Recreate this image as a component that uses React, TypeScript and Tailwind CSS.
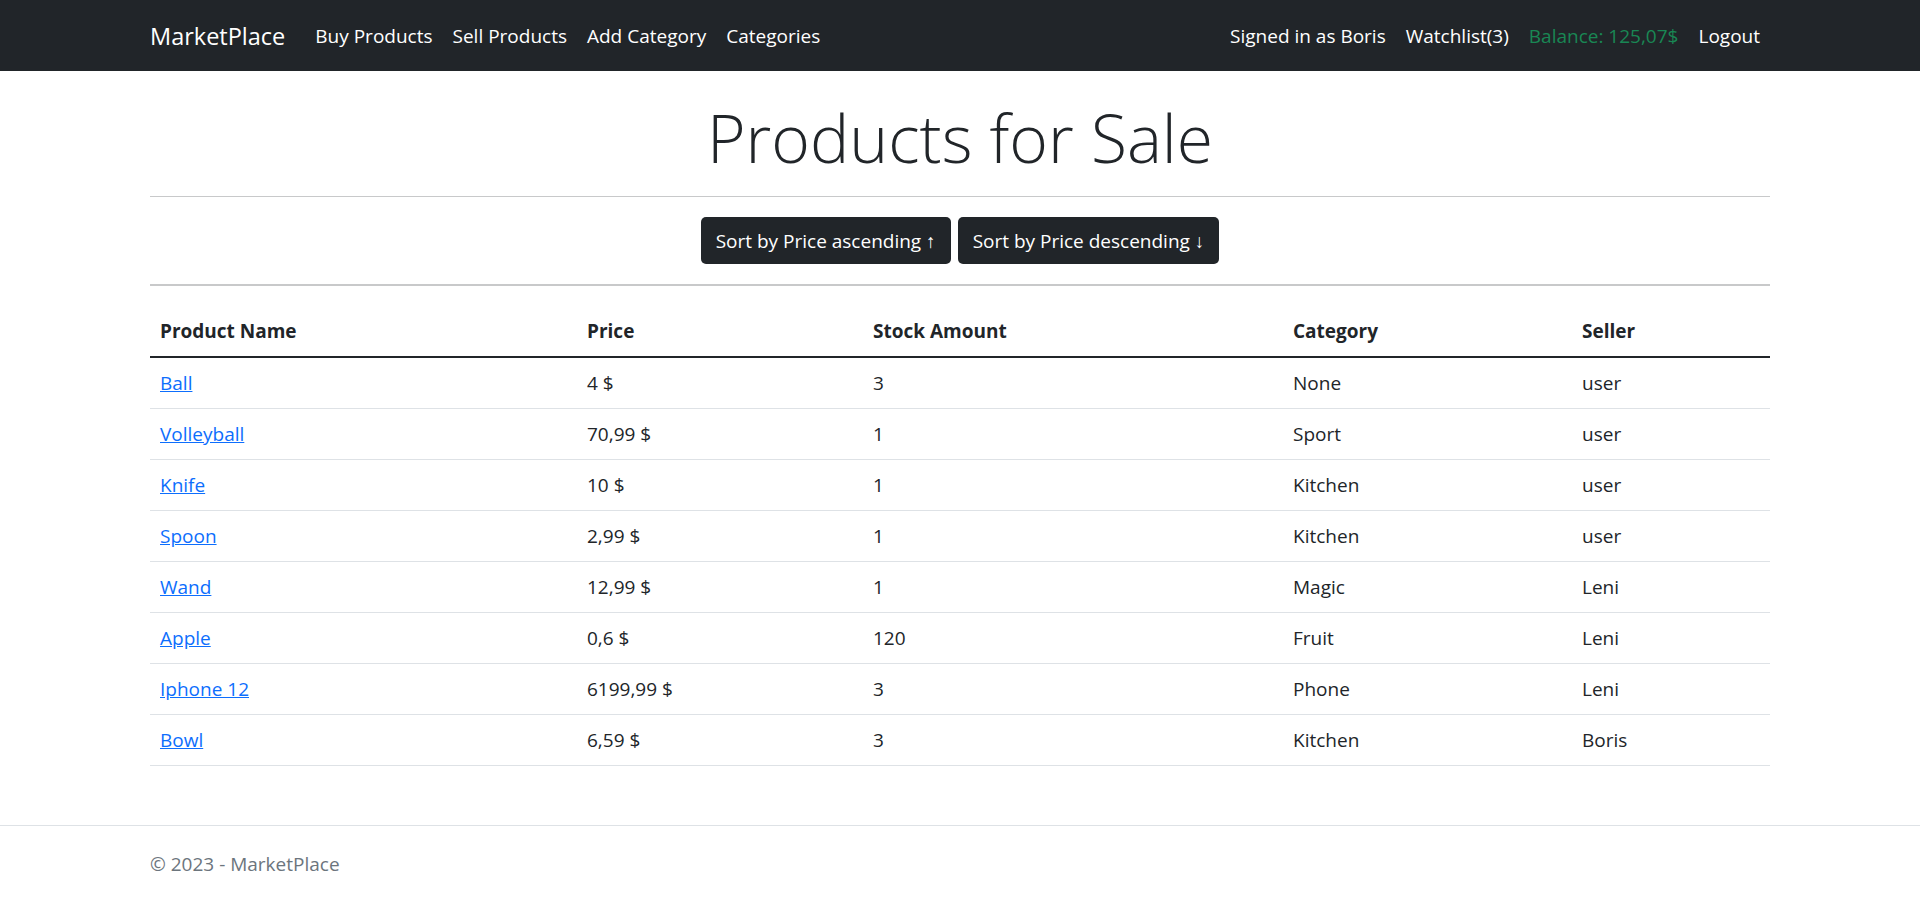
import React from 'react'

interface Product {
  name: string
  price: string
  stock: number
  category: string
  seller: string
}

const products: Product[] = [
  { name: 'Ball', price: '4 $', stock: 3, category: 'None', seller: 'user' },
  { name: 'Volleyball', price: '70,99 $', stock: 1, category: 'Sport', seller: 'user' },
  { name: 'Knife', price: '10 $', stock: 1, category: 'Kitchen', seller: 'user' },
  { name: 'Spoon', price: '2,99 $', stock: 1, category: 'Kitchen', seller: 'user' },
  { name: 'Wand', price: '12,99 $', stock: 1, category: 'Magic', seller: 'Leni' },
  { name: 'Apple', price: '0,6 $', stock: 120, category: 'Fruit', seller: 'Leni' },
  { name: 'Iphone 12', price: '6199,99 $', stock: 3, category: 'Phone', seller: 'Leni' },
  { name: 'Bowl', price: '6,59 $', stock: 3, category: 'Kitchen', seller: 'Boris' },
]

const font = { fontFamily: "'Segoe UI', 'Open Sans', 'Noto Sans', sans-serif" }

const leftLinks = ['Buy Products', 'Sell Products', 'Add Category', 'Categories']

export default function App() {
  return (
    <div className="min-h-screen flex flex-col bg-white text-[#212529] text-[19px] leading-[30px]" style={font}>
      {/* ── Navbar ── */}
      <nav className="h-[71px] bg-[#212529] shrink-0">
        <div className="mx-auto w-[1620px] h-full flex items-center justify-between">
          <div className="flex items-center">
            <a className="text-[23.5px] leading-[38px] text-white mr-[20px]">MarketPlace</a>
            {leftLinks.map((l) => (
              <a key={l} className="px-[10px] text-white">
                {l}
              </a>
            ))}
          </div>
          <div className="flex items-center">
            <span className="px-[10px] text-white">Signed in as Boris</span>
            <a className="px-[10px] text-white">Watchlist(3)</a>
            <span className="px-[10px] text-[#198754]">Balance: 125,07$</span>
            <a className="px-[10px] text-white">Logout</a>
          </div>
        </div>
      </nav>

      {/* ── Main ── */}
      <main className="mx-auto w-[1620px] pb-[20px]">
        <div className="text-center">
          <h1 className="mt-[24px] text-[66px] leading-[84px] font-light">Products for Sale</h1>
          <hr className="mt-[17px] border-[#c8c9ca]" />
          <div className="mt-[20px] flex justify-center gap-[7px]">
            <button className="h-[47px] px-[15px] rounded-[5px] bg-[#212529] text-white">
              Sort by Price ascending ↑
            </button>
            <button className="h-[47px] px-[15px] rounded-[5px] bg-[#212529] text-white">
              Sort by Price descending ↓
            </button>
          </div>
          <hr className="mt-[20px] border-t-2 border-[#c8c9ca]" />
        </div>

        <table className="mt-[20px] w-full table-fixed text-left">
          <thead>
            <tr className="border-b-2 border-[#212529]">
              <th className="w-[427px] px-[10px] py-[10px] font-bold">Product Name</th>
              <th className="w-[286px] px-[10px] py-[10px] font-bold">Price</th>
              <th className="w-[420px] px-[10px] py-[10px] font-bold">Stock Amount</th>
              <th className="w-[289px] px-[10px] py-[10px] font-bold">Category</th>
              <th className="px-[10px] py-[10px] font-bold">Seller</th>
            </tr>
          </thead>
          <tbody>
            {products.map((p) => (
              <tr key={p.name} className="border-b border-[#dee2e6]">
                <td className="px-[10px] py-[10px]">
                  <a className="text-[#0d6efd] underline">{p.name}</a>
                </td>
                <td className="px-[10px] py-[10px]">{p.price}</td>
                <td className="px-[10px] py-[10px]">{p.stock}</td>
                <td className="px-[10px] py-[10px]">{p.category}</td>
                <td className="px-[10px] py-[10px]">{p.seller}</td>
              </tr>
            ))}
          </tbody>
        </table>
      </main>

      {/* ── Footer ── */}
      <footer className="mt-auto border-t border-[#dee2e6] text-[#6c757d] whitespace-nowrap">
        <div className="mx-auto w-[1620px] pt-[4px] leading-[69px]">© 2023 - MarketPlace</div>
      </footer>
    </div>
  )
}
